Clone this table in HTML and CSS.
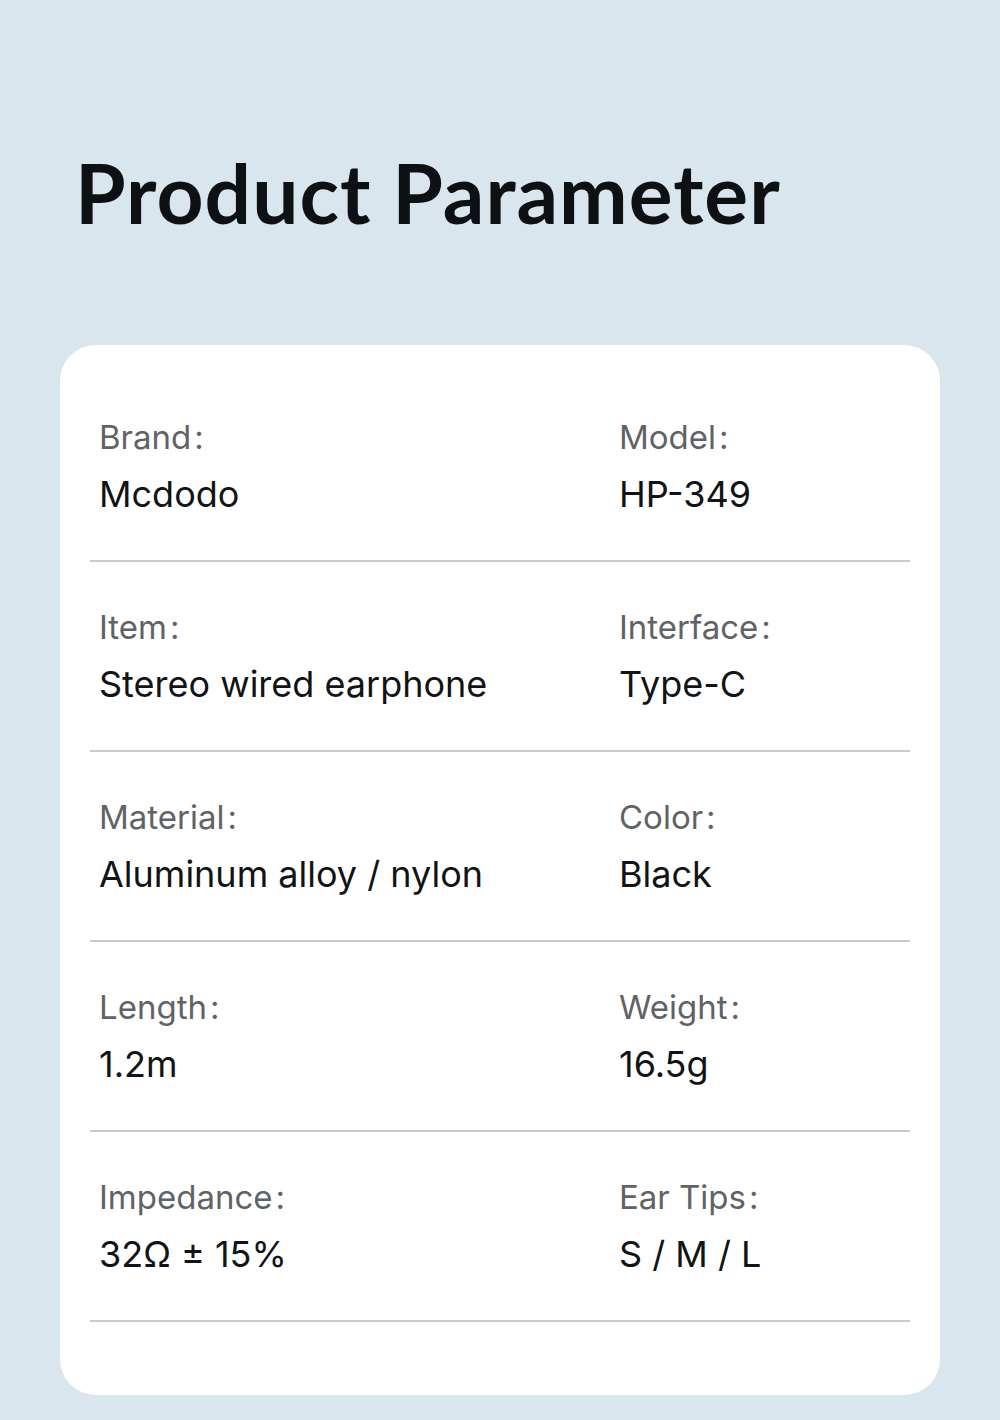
FILE: index.html
```html
<!DOCTYPE html>
<html lang="en">
<head>
<meta charset="utf-8">
<title>Product Parameter</title>
<link rel="stylesheet" href="styles.css">
</head>
<body>
<main class="page">
  <h1 class="title">Product Parameter</h1>
  <section class="card">
    <div class="row">
      <div class="cell"><div class="label">Brand&#8202;:</div><div class="value">Mcdodo</div></div>
      <div class="cell"><div class="label">Model&#8202;:</div><div class="value">HP-349</div></div>
    </div>
    <div class="row">
      <div class="cell"><div class="label">Item&#8202;:</div><div class="value">Stereo wired earphone</div></div>
      <div class="cell"><div class="label">Interface&#8202;:</div><div class="value">Type-C</div></div>
    </div>
    <div class="row">
      <div class="cell"><div class="label">Material&#8202;:</div><div class="value">Aluminum alloy / nylon</div></div>
      <div class="cell"><div class="label">Color&#8202;:</div><div class="value">Black</div></div>
    </div>
    <div class="row">
      <div class="cell"><div class="label">Length&#8202;:</div><div class="value">1.2m</div></div>
      <div class="cell"><div class="label">Weight&#8202;:</div><div class="value">16.5g</div></div>
    </div>
    <div class="row">
      <div class="cell"><div class="label">Impedance&#8202;:</div><div class="value">32Ω ± 15%</div></div>
      <div class="cell"><div class="label">Ear Tips&#8202;:</div><div class="value">S / M / L</div></div>
    </div>
  </section>
</main>
</body>
</html>
```

FILE: styles.css
```css
html, body {
  margin: 0;
  padding: 0;
}
body {
  background: #dae6ee;
  font-family: "Inter", "Noto Sans", sans-serif;
}
.page {
  width: 1000px;
  height: 1420px;
  padding: 0 60px;
  box-sizing: border-box;
}
.title {
  margin: 0;
  padding: 147px 0 0 15px;
  height: 345px;
  box-sizing: border-box;
  font-family: "Lato", "Inter", sans-serif;
  font-size: 82px;
  line-height: 90px;
  font-weight: 700;
  color: #0e1114;
  letter-spacing: 1px;
}
.card {
  background: #ffffff;
  border-radius: 36px;
  height: 1050px;
  padding: 27px 30px 0;
  box-sizing: border-box;
}
.row {
  display: grid;
  grid-template-columns: 520px 1fr;
  height: 190px;
  box-sizing: border-box;
  border-bottom: 2px solid #c9c9c9;
  padding: 45px 0 0 9px;
}
.label {
  font-family: "Inter", "Noto Sans", sans-serif;
  font-size: 33px;
  line-height: 40px;
  color: #5f6366;
}
.value {
  font-family: "Inter", "Noto Sans", sans-serif;
  font-size: 36px;
  line-height: 40px;
  margin-top: 17px;
  color: #111315;
}
```
